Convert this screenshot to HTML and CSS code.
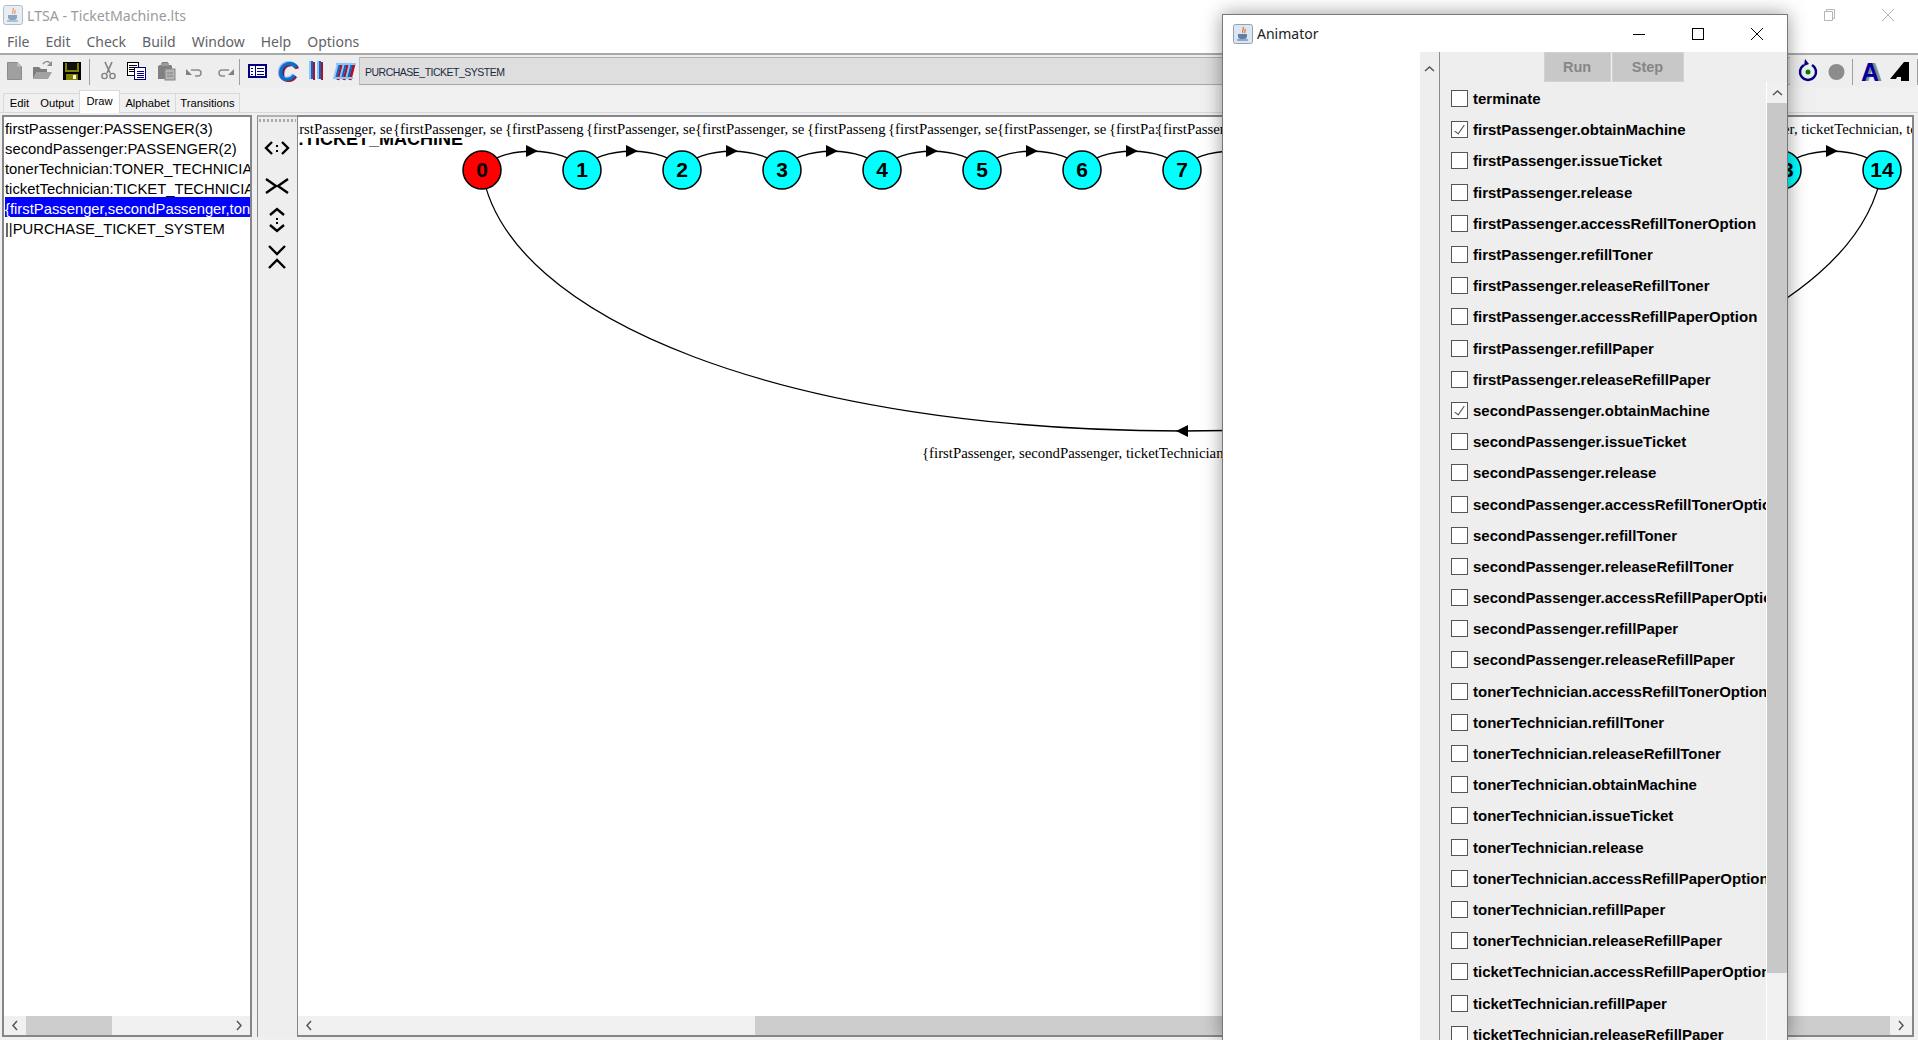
FILE: index.html
```html
<!DOCTYPE html>
<html lang="en">
<head>
  <meta charset="UTF-8" />
  <title>LTSA - TicketMachine.lts</title>
  <link rel="stylesheet" href="styles.css">
</head>
<body>

<div class="titlebar">
  <svg class="java-icon" viewBox="0 0 20 20"><rect x="0.5" y="0.5" width="19" height="19" rx="2" fill="#dde6ef" stroke="#8da3b8"/><path d="M10 3c2 2-2 3 0 6M12 5c1 1-1 2 0 4" stroke="#e2762a" fill="none" stroke-width="1.3"/><path d="M5 10h9v2a3 3 0 0 1-3 3H8a3 3 0 0 1-3-3z" fill="#5b7fa6"/><path d="M4 16h11" stroke="#5b7fa6" stroke-width="1.2"/></svg>
  <span class="title-text">LTSA - TicketMachine.lts</span>
  <div class="win-controls faded">
    <span class="min-line"></span>
    <svg width="14" height="14" viewBox="0 0 14 14"><path d="M3.5 3.5v-2h8v9h-2M1.5 3.5h8v9h-8z" fill="none" stroke="#b5b5b5"/></svg>
    <svg width="14" height="14" viewBox="0 0 14 14"><path d="M1 1l12 12M13 1L1 13" stroke="#b5b5b5"/></svg>
  </div>
</div>

<nav class="menubar">
  <span>File</span><span>Edit</span><span>Check</span><span>Build</span><span>Window</span><span>Help</span><span>Options</span>
</nav>

<div class="toolbar">
  <svg class="tool" viewBox="0 0 29 30"><path d="M7.5 6.5h10l4 4v13h-14z" fill="#a0a0a0" stroke="#8c8c8c"/><path d="M17.5 6.5v4h4z" fill="#c8c8c8"/></svg>
  <svg class="tool" viewBox="0 0 29 30"><path d="M4 23V11h6l2 2h6v3H8l-4 7z" fill="#7e7e7e"/><path d="M4 23l4-7h15l-4 7z" fill="#a2a2a2"/><path d="M14 8c2-3 5-3 7-1" fill="none" stroke="#8c8c8c" stroke-width="1.5"/><path d="M23 5v5h-5z" fill="#8c8c8c"/></svg>
  <svg class="tool" viewBox="0 0 29 30" shape-rendering="crispEdges"><rect x="5" y="6" width="18" height="18" fill="#000"/><rect x="7" y="7" width="14" height="9" fill="#808000"/><rect x="9" y="7" width="10" height="7" fill="#111"/><rect x="8" y="18" width="12" height="6" fill="#808000"/><rect x="15" y="19" width="3" height="4" fill="#fff"/></svg>
  <span class="tool-sep first"></span>
  <svg class="tool" viewBox="0 0 29 30"><path d="M11 6l5 11M18 6l-5 11" stroke="#808080" stroke-width="1.6" fill="none"/><circle cx="10.5" cy="20" r="2.6" fill="none" stroke="#808080" stroke-width="1.4"/><circle cx="18.5" cy="20" r="2.6" fill="none" stroke="#808080" stroke-width="1.4"/></svg>
  <svg class="tool" viewBox="0 0 29 30" shape-rendering="crispEdges"><rect x="4.500" y="6.500" width="11" height="13" fill="#fff" stroke="#000"/><path d="M6 9h8M6 11h8M6 13h5M6 15h5" stroke="#000"/><rect x="11.500" y="11.500" width="11" height="12" fill="#fff" stroke="#000080" stroke-width="1.500"/><path d="M14 15h7M14 17h7M14 19h7M14 21h7" stroke="#000080"/></svg>
  <svg class="tool" viewBox="0 0 29 30"><path d="M8 9h2V6h6v3h3l1 1v13H6V10z" fill="#808080"/><rect x="9" y="7" width="8" height="3" fill="#9a9a9a"/><rect x="13" y="13" width="10" height="11" fill="#b4b4b4" stroke="#858585"/><path d="M15 17h6M15 20h6" stroke="#808080"/></svg>
  <svg class="tool" viewBox="0 0 29 30"><path d="M10 14h7c4 0 4 6 0 6h-3" fill="none" stroke="#8c8c8c" stroke-width="1.500"/><path d="M5 13l6 6H5z" fill="#808080"/></svg>
  <svg class="tool" viewBox="0 0 29 30"><path d="M19 14h-7c-4 0-4 6 0 6h3" fill="none" stroke="#8c8c8c" stroke-width="1.500"/><path d="M24 13v6h-6z" fill="#808080"/></svg>
  <span class="tool-sep second"></span>
  <svg class="tool" viewBox="0 0 29 30" shape-rendering="crispEdges"><rect x="6" y="9" width="17" height="12" fill="#fff" stroke="#000080" stroke-width="2"/><path d="M12 9v12" stroke="#000080"/><path d="M8 12h2M8 15h2M8 18h2M14 12h7M14 15h7M14 18h7" stroke="#000080"/></svg>
  <svg class="tool" viewBox="0 0 29 30"><text x="7" y="25.500" class="c-back">C</text><text x="4.500" y="23.500" class="c-light">C</text><text x="5.500" y="24.500" class="c-front">C</text></svg>
  <svg class="tool" viewBox="0 0 29 30" shape-rendering="crispEdges"><rect x="8" y="5" width="3" height="18" fill="#8ec5f5"/><rect x="10" y="5" width="2" height="18" fill="#0a64c8"/><rect x="12" y="6" width="2" height="18" fill="#b01020"/><rect x="16" y="5" width="2" height="18" fill="#8ec5f5"/><rect x="18" y="5" width="2" height="18" fill="#0a64c8"/><rect x="20" y="6" width="2" height="18" fill="#b01020"/></svg>
  <svg class="tool" viewBox="0 0 29 30"><g fill="none" stroke-width="3"><path d="M6 23L10 7M12 23L16 7M18 23L22 7" stroke="#b01020" transform="translate(2 1)"/><path d="M6 23L10 7M12 23L16 7M18 23L22 7" stroke="#8ec5f5" transform="translate(-1.500 0)"/><path d="M6 23L10 7M12 23L16 7M18 23L22 7" stroke="#0a64c8" stroke-width="2"/></g><path d="M3 21h20v2H3zM6 7h20v2H6z" fill="#8ec5f5"/></svg>
  <div class="target-field">PURCHASE_TICKET_SYSTEM</div>
  <svg class="tool" viewBox="0 0 29 30"><path d="M11 9a8 8 0 1 0 8 0" fill="none" stroke="#000080" stroke-width="2.400"/><path d="M12 3l4 5-5 2z" fill="#000080"/><circle cx="15" cy="16" r="2.500" fill="#008000"/></svg>
  <svg class="tool" viewBox="0 0 29 30"><circle cx="14.500" cy="16" r="8" fill="#8c8c8c"/></svg>
  <span class="tool-sep third"></span>
  <svg class="tool" viewBox="0 0 29 30"><text x="7" y="25" class="a-back">A</text><text x="4" y="25" class="a-front">A</text></svg>
  <svg class="tool" viewBox="0 0 29 30"><path d="M18 6h5v19h-8v-4h-4l-1 2H4z" fill="#000"/></svg>
  <span class="tool-sep fourth"></span>
</div>

<div class="tabs">
  <span class="tab tab-edit">Edit</span>
  <span class="tab tab-output">Output</span>
  <span class="tab tab-draw">Draw</span>
  <span class="tab tab-alphabet">Alphabet</span>
  <span class="tab tab-transitions">Transitions</span>
</div>

<main class="workspace">
  <section class="process-panel">
    <ul class="process-list">
      <li>firstPassenger:PASSENGER(3)</li>
      <li>secondPassenger:PASSENGER(2)</li>
      <li>tonerTechnician:TONER_TECHNICIAN</li>
      <li>ticketTechnician:TICKET_TECHNICIAN</li>
      <li class="selected">{firstPassenger,secondPassenger,tonerTechnician,ticketTechnician}</li>
      <li>||PURCHASE_TICKET_SYSTEM</li>
    </ul>
    <div class="hscroll">
      <span class="arrow-btn"><svg width="8" height="11" viewBox="0 0 8 11"><path d="M6 1L2 5.500 6 10" fill="none" stroke="#555" stroke-width="1.500"/></svg></span>
      <span class="thumb thumb-list"></span>
      <span class="track"></span>
      <span class="arrow-btn"><svg width="8" height="11" viewBox="0 0 8 11"><path d="M2 1l4 4.500L2 10" fill="none" stroke="#555" stroke-width="1.500"/></svg></span>
    </div>
  </section>

  <aside class="draw-tools">
    <div class="grip"></div>
    <svg class="draw-icons" viewBox="0 0 38 160" width="38" height="160">
      <g fill="none" stroke="#000" stroke-width="2.400">
        <path d="M14 20l-6 6 6 6M24 20l6 6-6 6"/>
        <path d="M8 57l10 7-10 7M30 57l-10 7 10 7"/>
        <path d="M12 93l7-6 7 6M12 103l7 6 7-6"/>
        <path d="M11 124l8 8 8-8M11 146l8-8 8 8"/>
      </g>
      <path d="M18 23h2v2h-2zM18 28h2v2h-2zM18 96h2v2h-2zM18 100h2v2h-2z"/>
    </svg>
  </aside>

  <section class="draw-panel">
    <svg class="diagram" viewBox="298 117 1615 899" width="1615" height="899">
      <defs>
        <clipPath id="heading-clip"><rect x="298" y="138" width="300" height="20"/></clipPath>
      </defs>

      <text class="heading" x="298" y="145" clip-path="url(#heading-clip)">:TICKET_MACHINE</text>

      <g class="edge-label">
        <text x="283" y="134">{firstPassenger, se</text>
        <text x="393" y="134">{firstPassenger, se</text>
        <text x="505" y="134">{firstPasseng</text>
        <text x="586" y="134">{firstPassenger, se</text>
        <text x="695" y="134">{firstPassenger, se</text>
        <text x="807" y="134">{firstPasseng</text>
        <text x="888" y="134">{firstPassenger, se</text>
        <text x="997" y="134">{firstPassenger, se</text>
        <text x="1109" y="134">{firstPa:</text>
        <text x="1156" y="134">{firstPassen</text>
        <text x="1783" y="134">er, ticketTechnician, tc</text>
        <text x="922" y="458">{firstPassenger, secondPassenger, ticketTechnician</text>
      </g>

      <g class="edges">
        <path d="M482 170c15-25 85-25 100 0c15-25 85-25 100 0c15-25 85-25 100 0c15-25 85-25 100 0c15-25 85-25 100 0c15-25 85-25 100 0c15-25 85-25 100 0c15-25 85-25 100 0"/>
        <path d="M1782 170c15-25 85-25 100 0"/>
        <path d="M482 170C505 320 790 431 1182 431S1859 320 1882 170"/>
      </g>

      <g class="arrows">
        <path d="M526 145v12l12-6z"/>
        <path d="M626 145v12l12-6z"/>
        <path d="M726 145v12l12-6z"/>
        <path d="M826 145v12l12-6z"/>
        <path d="M926 145v12l12-6z"/>
        <path d="M1026 145v12l12-6z"/>
        <path d="M1126 145v12l12-6z"/>
        <path d="M1826 145v12l12-6z"/>
        <path d="M1188 425v12l-12-6z"/>
      </g>

      <g class="nodes">
        <circle class="start" cx="482" cy="170" r="19"/>
        <circle cx="582" cy="170" r="19"/>
        <circle cx="682" cy="170" r="19"/>
        <circle cx="782" cy="170" r="19"/>
        <circle cx="882" cy="170" r="19"/>
        <circle cx="982" cy="170" r="19"/>
        <circle cx="1082" cy="170" r="19"/>
        <circle cx="1182" cy="170" r="19"/>
        <circle cx="1782" cy="170" r="19"/>
        <circle cx="1882" cy="170" r="19"/>
      </g>
      <g class="node-label">
        <text x="482" y="177">0</text>
        <text x="582" y="177">1</text>
        <text x="682" y="177">2</text>
        <text x="782" y="177">3</text>
        <text x="882" y="177">4</text>
        <text x="982" y="177">5</text>
        <text x="1082" y="177">6</text>
        <text x="1182" y="177">7</text>
        <text x="1782" y="177">13</text>
        <text x="1882" y="177">14</text>
      </g>
    </svg>
    <div class="hscroll">
      <span class="arrow-btn"><svg width="8" height="11" viewBox="0 0 8 11"><path d="M6 1L2 5.500 6 10" fill="none" stroke="#555" stroke-width="1.500"/></svg></span>
      <span class="track track-main"></span>
      <span class="thumb thumb-main"></span>
      <span class="arrow-btn"><svg width="8" height="11" viewBox="0 0 8 11"><path d="M2 1l4 4.500L2 10" fill="none" stroke="#555" stroke-width="1.500"/></svg></span>
    </div>
  </section>
</main>

<!-- floating window, sits over the main frame -->
<div class="animator">
  <div class="animator-title">
    <svg class="java-icon" viewBox="0 0 20 20"><rect x="0.5" y="0.5" width="19" height="19" rx="2" fill="#dde6ef" stroke="#8da3b8"/><path d="M10 3c2 2-2 3 0 6M12 5c1 1-1 2 0 4" stroke="#e2762a" fill="none" stroke-width="1.3"/><path d="M5 10h9v2a3 3 0 0 1-3 3H8a3 3 0 0 1-3-3z" fill="#5b7fa6"/><path d="M4 16h11" stroke="#5b7fa6" stroke-width="1.2"/></svg>
    <span class="animator-name">Animator</span>
    <div class="win-controls">
      <svg width="14" height="14" viewBox="0 0 14 14"><path d="M1 7.500h12" stroke="#000"/></svg>
      <svg width="14" height="14" viewBox="0 0 14 14"><rect x="1.500" y="1.500" width="11" height="11" fill="none" stroke="#000"/></svg>
      <svg width="14" height="14" viewBox="0 0 14 14"><path d="M1 1l12 12M13 1L1 13" stroke="#000"/></svg>
    </div>
  </div>
  <div class="animator-body">
    <div class="trace-pane"></div>
    <div class="trace-scroll">
      <svg width="11" height="8" viewBox="0 0 11 8"><path d="M1 6l4.500-4L10 6" fill="none" stroke="#555" stroke-width="1.500"/></svg>
    </div>
    <div class="action-pane">
      <div class="action-buttons">
        <span class="action-btn run">Run</span>
        <span class="action-btn step">Step</span>
      </div>
      <div class="action-area">
        <ul class="action-list">
          <li><span class="box"></span>terminate</li>
          <li><span class="box checked"></span>firstPassenger.obtainMachine</li>
          <li><span class="box"></span>firstPassenger.issueTicket</li>
          <li><span class="box"></span>firstPassenger.release</li>
          <li><span class="box"></span>firstPassenger.accessRefillTonerOption</li>
          <li><span class="box"></span>firstPassenger.refillToner</li>
          <li><span class="box"></span>firstPassenger.releaseRefillToner</li>
          <li><span class="box"></span>firstPassenger.accessRefillPaperOption</li>
          <li><span class="box"></span>firstPassenger.refillPaper</li>
          <li><span class="box"></span>firstPassenger.releaseRefillPaper</li>
          <li><span class="box checked"></span>secondPassenger.obtainMachine</li>
          <li><span class="box"></span>secondPassenger.issueTicket</li>
          <li><span class="box"></span>secondPassenger.release</li>
          <li><span class="box"></span>secondPassenger.accessRefillTonerOption</li>
          <li><span class="box"></span>secondPassenger.refillToner</li>
          <li><span class="box"></span>secondPassenger.releaseRefillToner</li>
          <li><span class="box"></span>secondPassenger.accessRefillPaperOption</li>
          <li><span class="box"></span>secondPassenger.refillPaper</li>
          <li><span class="box"></span>secondPassenger.releaseRefillPaper</li>
          <li><span class="box"></span>tonerTechnician.accessRefillTonerOption</li>
          <li><span class="box"></span>tonerTechnician.refillToner</li>
          <li><span class="box"></span>tonerTechnician.releaseRefillToner</li>
          <li><span class="box"></span>tonerTechnician.obtainMachine</li>
          <li><span class="box"></span>tonerTechnician.issueTicket</li>
          <li><span class="box"></span>tonerTechnician.release</li>
          <li><span class="box"></span>tonerTechnician.accessRefillPaperOption</li>
          <li><span class="box"></span>tonerTechnician.refillPaper</li>
          <li><span class="box"></span>tonerTechnician.releaseRefillPaper</li>
          <li><span class="box"></span>ticketTechnician.accessRefillPaperOption</li>
          <li><span class="box"></span>ticketTechnician.refillPaper</li>
          <li><span class="box"></span>ticketTechnician.releaseRefillPaper</li>
        </ul>
        <div class="action-scroll">
          <span class="scroll-up"><svg width="11" height="8" viewBox="0 0 11 8"><path d="M1 6l4.500-4L10 6" fill="none" stroke="#555" stroke-width="1.500"/></svg></span>
          <span class="vthumb"></span>
        </div>
      </div>
    </div>
  </div>
</div>

</body>
</html>
```
FILE: styles.css
```css
body {
  margin: 0;
  width: 1918px;
  height: 1040px;
  overflow: hidden;
  position: relative;
  background: #f0f0f0;
  font-family: 'Liberation Sans', sans-serif;
  color: #000;
}
ul {
  margin: 0;
  padding: 0;
  list-style: none;
}
.java-icon {
  width: 20px;
  height: 20px;
  flex: none;
}

/* main frame */
.titlebar {
  height: 30px;
  background: #fff;
  display: flex;
  align-items: center;
  padding: 0 0 0 3px;
}
.titlebar .java-icon {
  opacity: 0.7;
}
.title-text {
  margin-left: 4px;
  font-family: 'Noto Sans', sans-serif;
  font-size: 14.2px;
  color: #9b9b9b;
}
.win-controls {
  margin-left: auto;
  display: flex;
  align-items: center;
}
.faded {
  padding-right: 23px;
  gap: 44px;
}
.min-line {
  width: 12px;
  height: 1px;
  background: #b5b5b5;
}
.menubar {
  height: 23px;
  background: #fff;
  display: flex;
  padding-left: 7px;
  gap: 16px;
  font-family: 'Noto Sans', sans-serif;
  font-size: 14px;
  line-height: 23px;
  color: #5f6368;
}
.toolbar {
  height: 32px;
  border-top: 2px solid #a9a9a9;
  background: #eeeeee;
  display: flex;
  align-items: flex-start;
}
.tool {
  width: 29px;
  height: 30px;
  flex: none;
  margin-top: 1px;
}
.tool-sep {
  width: 1px;
  height: 26px;
  margin-top: 4px;
  background: #a0a0a0;
  flex: none;
}
.tool-sep.first {
  margin-left: 2px;
  margin-right: 4px;
}
.tool-sep.second {
  margin-right: 3px;
}
.tool-sep.third {
  margin-left: 1px;
  margin-right: 4px;
}
.tool-sep.fourth {
  margin-left: 2px;
}
.target-field {
  flex: 1;
  height: 28px;
  margin: 2px 3px 0 0;
  box-sizing: border-box;
  border-top: 1px solid #b0b0b0;
  border-bottom: 1px solid #a8a8a8;
  border-left: 1px solid #c0c0c0;
  background: #dedede;
  padding-left: 5px;
  font-size: 10.5px;
  letter-spacing: -0.5px;
  line-height: 28px;
  color: #1c2a44;
  white-space: nowrap;
}
.c-front, .c-back, .c-light {
  font-size: 27px;
  font-weight: bold;
  font-style: italic;
}
.c-front { fill: #0a6ed0; }
.c-back { fill: #b01020; }
.c-light { fill: #8ec5f5; }
.a-front, .a-back {
  font-size: 25px;
}
.a-front { fill: #0000a0; font-weight: bold; }
.a-back { fill: #8c8c8c; font-weight: bold; }

.tabs {
  height: 26px;
  display: flex;
  align-items: flex-end;
  padding-left: 3px;
  font-size: 11.2px;
  box-sizing: border-box;
  border-bottom: 1px solid #d9d9d9;
}
.tab {
  box-sizing: border-box;
  height: 19px;
  line-height: 19px;
  text-align: center;
  border-top: 1px solid #d9d9d9;
  border-right: 1px solid #d9d9d9;
}
.tab-edit {
  width: 32px;
  border-left: 1px solid #d9d9d9;
  border-right: none;
}
.tab-output {
  width: 44px;
  border-right: none;
}
.tab-draw {
  width: 41px;
  height: 23px;
  line-height: 20px;
  background: #fff;
  border-left: 1px solid #d9d9d9;
  margin-bottom: -1px;
}
.tab-alphabet {
  width: 56px;
}
.tab-transitions {
  width: 64px;
}

.workspace {
  display: flex;
  height: 922px;
  margin-top: 2px;
  padding-left: 2px;
}
.process-panel {
  width: 250px;
  box-sizing: border-box;
  border: 2px solid #85858a;
  display: flex;
  flex-direction: column;
  background: #fff;
}
.process-list {
  flex: 1;
  overflow: hidden;
  padding-left: 1px;
  font-size: 14.8px;
  white-space: nowrap;
}
.process-list li {
  height: 20px;
  line-height: 24px;
}
.selected {
  background: #0000ff;
  color: #fff;
}
.hscroll {
  height: 19px;
  flex: none;
  display: flex;
  background: #f0f0f0;
}
.arrow-btn {
  width: 22px;
  flex: none;
  display: flex;
  align-items: center;
  justify-content: center;
}
.thumb {
  background: #cdcdcd;
}
.thumb-list {
  width: 86px;
}
.track {
  flex: 1;
}
.thumb-main {
  width: 1137px;
}
.track-main {
  flex: none;
  width: 435px;
}
.draw-tools {
  width: 40px;
  margin-left: 5px;
  box-sizing: border-box;
  border-left: 1px solid #8c8c90;
  border-top: 2px solid #b0b0b0;
  background: #eeeeee;
}
.grip {
  height: 3px;
  margin: 2px 1px 0;
  background: repeating-linear-gradient(to right, #a8a8a8 0 2px, transparent 2px 4px);
}
.draw-icons {
  display: block;
}
.draw-panel {
  width: 1617px;
  box-sizing: border-box;
  border-top: 2px solid #85858a;
  border-right: 2px solid #85858a;
  border-bottom: 2px solid #85858a;
  border-left: 1px solid #85858a;
  background: #fff;
  display: flex;
  flex-direction: column;
  overflow: hidden;
}
.diagram {
  display: block;
  flex: none;
}
.edge-label text {
  font-family: 'Liberation Serif', serif;
  font-size: 14.8px;
}
.heading {
  font-size: 18px;
  font-weight: bold;
}
.edges path {
  fill: none;
  stroke: #000;
  stroke-width: 1.3;
}
.nodes circle {
  fill: #00ffff;
  stroke: #000;
  stroke-width: 1.5;
}
.nodes .start {
  fill: #ff0000;
}
.node-label text {
  font-size: 21px;
  font-weight: bold;
  text-anchor: middle;
}

/* animator window */
.animator {
  position: absolute;
  left: 1222px;
  top: 14px;
  width: 566px;
  height: 1026px;
  box-sizing: border-box;
  border: 1px solid #77777c;
  border-bottom: none;
  background: #fff;
  box-shadow: 0 0 18px rgba(0, 0, 0, 0.4);
  display: flex;
  flex-direction: column;
}
.animator-title {
  height: 37px;
  flex: none;
  display: flex;
  align-items: center;
  padding-left: 10px;
}
.animator-name {
  margin-left: 4px;
  font-family: 'Noto Sans', sans-serif;
  font-size: 14px;
  color: #222;
}
.animator-title .win-controls {
  padding-right: 23px;
  gap: 45px;
}
.animator-body {
  flex: 1;
  display: flex;
  min-height: 0;
}
.trace-pane {
  width: 197px;
  background: #fff;
}
.trace-scroll {
  width: 19px;
  background: #eeeeee;
  text-align: center;
  padding-top: 7px;
  box-sizing: border-box;
}
.action-pane {
  flex: 1;
  background: #eeeeee;
  border-left: 1px solid #8c8c90;
  display: flex;
  flex-direction: column;
  min-width: 0;
}
.action-buttons {
  height: 30px;
  flex: none;
  display: flex;
  justify-content: center;
  gap: 1px;
}
.action-btn {
  box-sizing: border-box;
  height: 30px;
  background: #c8c8c8;
  border: 1px solid #d2d2d2;
  color: #868686;
  font-size: 14.5px;
  font-weight: bold;
  line-height: 28px;
  text-align: center;
}
.run {
  width: 67px;
}
.step {
  width: 72px;
}
.action-area {
  flex: 1;
  display: flex;
  min-height: 0;
}
.action-list {
  flex: 1;
  min-width: 0;
  overflow: hidden;
  padding-top: 1px;
  border-right: 1px solid #fff;
  font-size: 15px;
  font-weight: bold;
  white-space: nowrap;
}
.action-list li {
  height: 31.2px;
  display: flex;
  align-items: center;
  padding-left: 11px;
}
.box {
  width: 17px;
  height: 17px;
  flex: none;
  box-sizing: border-box;
  margin-right: 5px;
  border: 1px solid #555;
  background: #fff;
}
.checked {
  position: relative;
}
.checked::after {
  content: "";
  position: absolute;
  left: 5px;
  top: 1px;
  width: 4px;
  height: 10px;
  border-right: 1px solid #555;
  border-bottom: 1px solid #555;
  transform: rotate(35deg);
}
.action-scroll {
  width: 20px;
  flex: none;
  background: #f0f0f0;
  display: flex;
  flex-direction: column;
}
.scroll-up {
  height: 21px;
  flex: none;
  display: flex;
  align-items: center;
  justify-content: center;
}
.vthumb {
  height: 870px;
  flex: none;
  background: #c8c8c8;
}
```
